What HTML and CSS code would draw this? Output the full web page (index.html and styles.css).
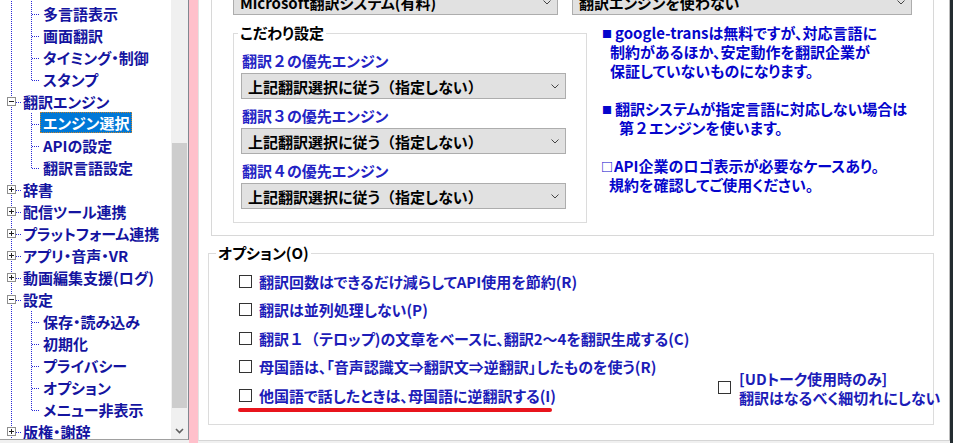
FILE: index.html
```html
<!DOCTYPE html>
<html lang="ja">
<head>
    <meta charset="UTF-8">
    <meta name="viewport" content="width=device-width, initial-scale=1.0">
    <title>翻訳エンジン</title>
    <link rel="stylesheet" href="styles.css">
</head>
<body>
    <div class="treePanel">
        <div class="tree">
            <div class="row spacer"><span class="cell0 pipe"></span><span class="cell1 pipe"></span></div>
            <div class="row"><span class="cell0 pipe"></span><span class="cell1 tee"></span><span class="label">多言語表示</span></div>
            <div class="row"><span class="cell0 pipe"></span><span class="cell1 tee"></span><span class="label">画面翻訳</span></div>
            <div class="row"><span class="cell0 pipe"></span><span class="cell1 tee"></span><span class="label">タイミング・制御</span></div>
            <div class="row"><span class="cell0 pipe"></span><span class="cell1 elbow"></span><span class="label">スタンプ</span></div>
            <div class="row"><span class="cell0 tee"><span class="box"></span></span><span class="label">翻訳エンジン</span></div>
            <div class="row"><span class="cell0 pipe"></span><span class="cell1 tee"></span><span class="label selected">エンジン選択</span></div>
            <div class="row"><span class="cell0 pipe"></span><span class="cell1 tee"></span><span class="label">APIの設定</span></div>
            <div class="row"><span class="cell0 pipe"></span><span class="cell1 elbow"></span><span class="label">翻訳言語設定</span></div>
            <div class="row"><span class="cell0 tee"><span class="box plus"></span></span><span class="label">辞書</span></div>
            <div class="row"><span class="cell0 tee"><span class="box plus"></span></span><span class="label">配信ツール連携</span></div>
            <div class="row"><span class="cell0 tee"><span class="box plus"></span></span><span class="label">プラットフォーム連携</span></div>
            <div class="row"><span class="cell0 tee"><span class="box plus"></span></span><span class="label">アプリ・音声・VR</span></div>
            <div class="row"><span class="cell0 tee"><span class="box plus"></span></span><span class="label">動画編集支援(ログ)</span></div>
            <div class="row"><span class="cell0 tee"><span class="box"></span></span><span class="label">設定</span></div>
            <div class="row"><span class="cell0 pipe"></span><span class="cell1 tee"></span><span class="label">保存・読み込み</span></div>
            <div class="row"><span class="cell0 pipe"></span><span class="cell1 tee"></span><span class="label">初期化</span></div>
            <div class="row"><span class="cell0 pipe"></span><span class="cell1 tee"></span><span class="label">プライバシー</span></div>
            <div class="row"><span class="cell0 pipe"></span><span class="cell1 tee"></span><span class="label">オプション</span></div>
            <div class="row"><span class="cell0 pipe"></span><span class="cell1 elbow"></span><span class="label">メニュー非表示</span></div>
            <div class="row"><span class="cell0 tee"><span class="box plus"></span></span><span class="label">版権・謝辞</span></div>
        </div>
        <div class="scrollbar">
            <div class="thumb"></div>
            <div class="fill"></div>
            <div class="arrowDown">
                <svg width="9" height="6" viewBox="0 0 9 6"><polyline points="1,1 4.5,4.5 8,1" fill="none" stroke="#606060" stroke-width="1.6"/></svg>
            </div>
        </div>
    </div>

    <div class="divider"></div>

    <div class="main">
        <div class="scrollArea">
            <div class="engineBox">
                <div class="engineRow">
                    <div class="combo engine1">
                        <span>Microsoft翻訳システム(有料)</span>
                        <svg width="8" height="5" viewBox="0 0 8 5"><polyline points="0.5,0.5 4,4 7.5,0.5" fill="none" stroke="#444" stroke-width="1"/></svg>
                    </div>
                    <div class="combo engine2">
                        <span>翻訳エンジンを使わない</span>
                        <svg width="8" height="5" viewBox="0 0 8 5"><polyline points="0.5,0.5 4,4 7.5,0.5" fill="none" stroke="#444" stroke-width="1"/></svg>
                    </div>
                </div>

                <div class="detailRow">
                    <fieldset class="group prefGroup">
                        <legend>こだわり設定</legend>
                        <div class="prefBody">
                            <div class="prefLabel">翻訳<span class="fw">２</span>の優先エンジン</div>
                            <div class="combo prefCombo">
                                <span>上記翻訳選択に従う<span class="fw">（</span>指定しない<span class="fw">）</span></span>
                                <svg width="8" height="5" viewBox="0 0 8 5"><polyline points="0.5,0.5 4,4 7.5,0.5" fill="none" stroke="#444" stroke-width="1"/></svg>
                            </div>
                            <div class="prefLabel">翻訳<span class="fw">３</span>の優先エンジン</div>
                            <div class="combo prefCombo">
                                <span>上記翻訳選択に従う<span class="fw">（</span>指定しない<span class="fw">）</span></span>
                                <svg width="8" height="5" viewBox="0 0 8 5"><polyline points="0.5,0.5 4,4 7.5,0.5" fill="none" stroke="#444" stroke-width="1"/></svg>
                            </div>
                            <div class="prefLabel">翻訳<span class="fw">４</span>の優先エンジン</div>
                            <div class="combo prefCombo">
                                <span>上記翻訳選択に従う<span class="fw">（</span>指定しない<span class="fw">）</span></span>
                                <svg width="8" height="5" viewBox="0 0 8 5"><polyline points="0.5,0.5 4,4 7.5,0.5" fill="none" stroke="#444" stroke-width="1"/></svg>
                            </div>
                        </div>
                    </fieldset>

                    <div class="notes">
                        <div class="ind1"><span class="mark">■</span>google-transは無料ですが、対応言語に</div>
                        <div class="ind2">制約があるほか、安定動作を翻訳企業が</div>
                        <div class="ind2">保証していないものになります。</div>
                        <div></div>
                        <div class="ind1"><span class="mark">■</span>翻訳システムが指定言語に対応しない場合は</div>
                        <div class="ind3">第<span class="fw">２</span>エンジンを使います。</div>
                        <div></div>
                        <div><span class="mark hollow">□</span>API企業のロゴ表示が必要なケースあり。</div>
                        <div class="ind4">規約を確認してご使用ください。</div>
                    </div>
                </div>
            </div>

            <fieldset class="group optionsGroup">
                <legend>オプション(O)</legend>
                <div class="optionsBody">
                    <div class="optionsRow">
                        <div class="checkList">
                            <div class="check"><span class="box13"></span>翻訳回数はできるだけ減らしてAPI使用を節約(R)</div>
                            <div class="check"><span class="box13"></span>翻訳は並列処理しない(P)</div>
                            <div class="check"><span class="box13"></span>翻訳<span class="fw">１</span><span class="fw">（</span>テロップ)の文章をベースに、翻訳2～4を翻訳生成する(C)</div>
                            <div class="check"><span class="box13"></span>母国語は、「音声認識文⇒翻訳文⇒逆翻訳」したものを使う(R)</div>
                            <div class="check"><span class="box13"></span>他国語で話したときは、母国語に逆翻訳する(I)</div>
                        </div>
                        <div class="udItem">
                            <span class="box13"></span>
                            <div>
                                <div>[UDトーク使用時のみ]</div>
                                <div>翻訳はなるべく細切れにしない</div>
                            </div>
                        </div>
                    </div>
                    <div class="redMark"></div>
                </div>
            </fieldset>
        </div>
    </div>

    <div class="edge"></div>
</body>
</html>
```

FILE: styles.css
```css
*{
    box-sizing: border-box;
}
:root{
    --dotV: repeating-linear-gradient(to bottom, #2a2ad8 0 1px, transparent 1px 2px);
    --dotH: repeating-linear-gradient(to right, #2a2ad8 0 1px, transparent 1px 2px);
}
body{
    margin: 0;
    width: 953px;
    height: 443px;
    overflow: hidden;
    display: flex;
    background-color: #f0f0f0;
    font-family: "Noto Sans CJK JP", "Noto Sans", sans-serif;
    font-weight: 700;
    font-size: 15px;
    font-feature-settings: "palt" 1;
}
.fw{
    font-feature-settings: normal;
}

/* tree */
.treePanel{
    width: 189px;
    height: 440px;
    flex: none;
    display: flex;
    background-color: #fff;
    border-right: 1px solid #828790;
    border-bottom: 1px solid #a0a0a0;
    overflow: hidden;
}
.tree{
    width: 171px;
    color: #1414a0;
}
.row{
    display: flex;
    height: 22px;
    line-height: 22px;
    white-space: nowrap;
}
.spacer{
    margin-top: -19px;
}
.cell0{
    width: 21px;
    flex: none;
}
.cell1{
    width: 19px;
    flex: none;
}
.cell0.pipe{
    background: var(--dotV) 11px 0 / 1px 100% no-repeat;
}
.cell0.tee{
    background: var(--dotH) 12px 11px / 9px 1px no-repeat, var(--dotV) 11px 0 / 1px 100% no-repeat;
}
.cell1.pipe{
    background: var(--dotV) 10px 0 / 1px 100% no-repeat;
}
.cell1.tee{
    background: var(--dotH) 11px 11px / 8px 1px no-repeat, var(--dotV) 10px 0 / 1px 100% no-repeat;
}
.cell1.elbow{
    background: var(--dotH) 11px 11px / 8px 1px no-repeat, var(--dotV) 10px 0 / 1px 11px no-repeat;
}
.box{
    display: block;
    width: 9px;
    height: 9px;
    margin: 6px 0 0 7px;
    border: 1px solid #8e8e8e;
    background: linear-gradient(#222, #222) center / 5px 1px no-repeat, #fff;
}
.box.plus{
    background: linear-gradient(#222, #222) center / 5px 1px no-repeat, linear-gradient(#222, #222) center / 1px 5px no-repeat, #fff;
}
.label{
    padding: 0 2px;
}
.cell1 + .label{
    padding: 0 3px;
}
.selected{
    height: 21px;
    line-height: 21px;
    margin-top: -1px;
    background-color: #0078d7;
    color: #fff;
    outline: 1px dotted #c8822a;
    outline-offset: -1px;
}
.scrollbar{
    width: 17px;
    flex: none;
    display: flex;
    flex-direction: column;
    background-color: #f0f0f0;
}
.thumb{
    height: 265px;
    margin: 143px 1px 0;
    background-color: #cdcdcd;
}
.fill{
    flex: 1;
}
.arrowDown{
    height: 17px;
    display: flex;
    align-items: center;
    justify-content: center;
}

.divider{
    width: 9px;
    flex: none;
    background-color: #ffc0cb;
}

/* main page */
.main{
    width: 752px;
    height: 441px;
    flex: none;
    padding: 0 15px 0 9px;
    background-color: #fff;
    border-left: 1px solid #e3e3e3;
    border-right: 1px solid #bcbcbc;
    border-bottom: 1px solid #d5d5d5;
    overflow: hidden;
}
.edge{
    width: 3px;
    flex: none;
    background-color: #232c30;
}
.scrollArea{
    margin-top: -40px;
}
.engineBox{
    margin-left: 3px;
    padding: 28px 0 12px 21px;
    border: 1px solid #d8d8d8;
}
.engineRow{
    display: flex;
    gap: 14px;
}
.combo{
    height: 26px;
    display: flex;
    align-items: center;
    justify-content: space-between;
    padding: 0 6px 0 6px;
    background-color: #e1e1e1;
    border: 1px solid #adadad;
    color: #000;
    white-space: nowrap;
    overflow: hidden;
}
.combo svg{
    flex: none;
}
.engine1{
    width: 325px;
}
.engine2{
    width: 340px;
}
.detailRow{
    display: flex;
    margin-top: 8px;
}
.group{
    margin: 0;
    padding: 0;
    min-width: 0;
    border: 1px solid #dcdcdc;
}
.group legend{
    padding: 0 2px;
    line-height: 20px;
    color: #000;
}
.prefGroup{
    width: 354px;
    flex: none;
}
.prefGroup legend{
    margin-left: 4px;
}
.prefBody{
    padding: 8px 0 6px 7px;
}
.prefLabel{
    padding-left: 1px;
    line-height: 20px;
    color: #2323c4;
}
.prefCombo{
    width: 325px;
    margin: 2px 0 7px;
}
.notes{
    margin-left: 14px;
    color: #0505cc;
    line-height: 19px;
}
.notes div{
    height: 19px;
    white-space: nowrap;
}
.mark{
    display: inline-block;
    width: 13px;
    font-size: 10px;
    vertical-align: 1px;
}
.mark.hollow{
    font-size: 12px;
    vertical-align: 0;
}
.ind1{
    padding-left: 1px;
}
.ind2{
    padding-left: 9px;
}
.ind3{
    padding-left: 18px;
}
.ind4{
    padding-left: 8px;
}

/* options */
.optionsGroup{
    width: 726px;
    margin-top: 7px;
}
.optionsGroup legend{
    margin-left: 7px;
}
.optionsBody{
    padding: 4px 0 12px 30px;
}
.optionsRow{
    display: flex;
}
.checkList{
    width: 479px;
    flex: none;
    color: #1c1cb8;
}
.check{
    height: 28.5px;
    display: flex;
    align-items: center;
    white-space: nowrap;
}
.box13{
    width: 13px;
    height: 13px;
    flex: none;
    margin-right: 7px;
    border: 1px solid #333;
    background-color: #fff;
}
.udItem{
    display: flex;
    align-items: center;
    align-self: flex-end;
    margin-bottom: 3px;
    line-height: 19px;
    white-space: nowrap;
    color: #1c1cb8;
}
.udItem .box13{
    margin-right: 8px;
}
.redMark{
    width: 314px;
    height: 4px;
    margin: -1.5px 0 0 -1px;
    border-radius: 2px;
    background-color: #e8141c;
}
```
